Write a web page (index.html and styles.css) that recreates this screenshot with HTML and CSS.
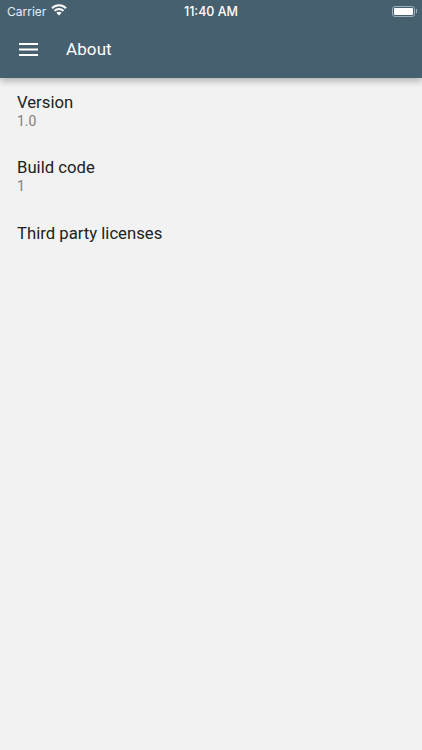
FILE: index.html
```html
<!DOCTYPE html>
<html lang="en">
<head>
<meta charset="utf-8">
<title>About</title>
<link rel="stylesheet" href="styles.css">
</head>
<body>
<div class="screen">
  <header class="header">
    <div class="status">
      <div class="status-left">
        <span class="carrier">Carrier</span>
        <svg class="wifi" width="16" height="12" viewBox="0 0 16 12"><path fill="none" stroke="#fff" stroke-width="2" d="M1 4.300C2.800 2.500 5.300 1.300 8 1.300s5.200 1.200 7 3"/><path fill="none" stroke="#fff" stroke-width="2" d="M3.500 6.900C4.700 5.700 6.300 5 8 5s3.300.7 4.500 1.900"/><path fill="#fff" d="M5.400 8.700C6.100 8.100 7 7.700 8 7.700s1.900.4 2.600 1L8 11.500z"/></svg>
      </div>
      <span class="time">11:40 AM</span>
      <div class="battery"><span class="battery-body"><span class="battery-fill"></span></span><span class="battery-cap"></span></div>
    </div>
    <div class="toolbar">
      <svg class="menu" width="19" height="13" viewBox="0 0 19 13"><path fill="#fff" d="M0 0h19v2H0zM0 5.500h19v2H0zM0 11h19v2H0z"/></svg>
      <h1 class="title">About</h1>
    </div>
  </header>
  <main class="list">
    <div class="item"><div class="label">Version</div><div class="value">1.0</div></div>
    <div class="item"><div class="label">Build code</div><div class="value">1</div></div>
    <div class="item"><div class="label">Third party licenses</div></div>
  </main>
</div>
</body>
</html>
```
FILE: styles.css
```css
* { box-sizing: border-box; }
html, body { margin: 0; padding: 0; }
body { width: 422px; height: 750px; overflow: hidden; background: #f2f2f2; font-family: Roboto, "Liberation Sans", sans-serif; }
.screen { width: 422px; height: 750px; display: flex; flex-direction: column; }
.header { height: 78px; background: #46606f; color: #fff; box-shadow: 0 3px 7px rgba(0,0,0,.28); }
.status { height: 22px; padding: 0 8px 0 7px; display: flex; align-items: center; justify-content: space-between; position: relative; }
.status-left { display: flex; align-items: center; gap: 5px; }
.carrier { font-family: Inter, "Liberation Sans", sans-serif; font-size: 12px; color: #e8edf0; }
.wifi { display: block; margin-bottom: 2px; }
.time { position: absolute; left: 0; right: 0; text-align: center; font-family: Inter, "Liberation Sans", sans-serif; font-size: 12.500px; font-weight: 500; }
.battery { display: flex; align-items: center; gap: 1px; margin-right: -3px; }
.battery-body { width: 23px; height: 11px; border: 1px solid #9fb0ba; border-radius: 3px; padding: 1px; display: block; }
.battery-fill { display: block; width: 100%; height: 100%; background: #fff; border-radius: 1px; }
.battery-cap { width: 1px; height: 4px; background: #9fb0ba; display: block; }
.toolbar { height: 55px; padding: 0 0 0 19px; display: flex; align-items: center; gap: 28px; }
.menu { display: block; flex: none; }
.title { margin: 0 0 2px; font-size: 17px; font-weight: 400; letter-spacing: .1px; }
.list { padding: 15px 17px 0; display: flex; flex-direction: column; gap: 28.300px; }
.label { font-size: 16.700px; line-height: 20px; color: #212121; }
.value { font-size: 14px; line-height: 17px; color: #808080; }
```
